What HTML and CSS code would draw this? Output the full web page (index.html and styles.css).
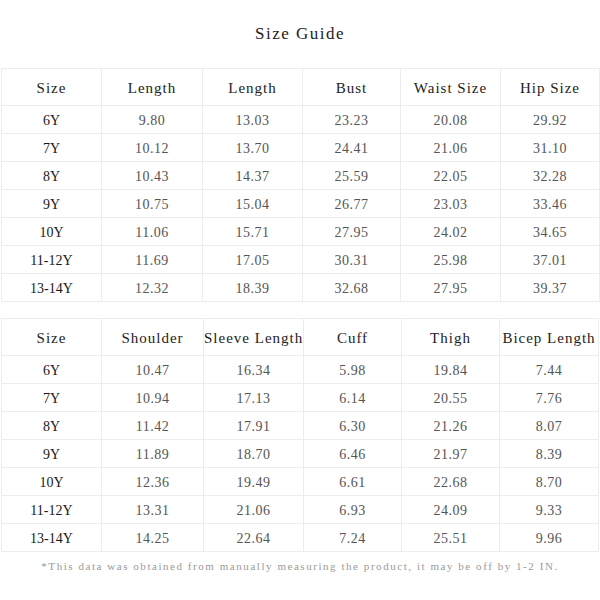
FILE: index.html
```
<!DOCTYPE html>
<html>
<head>
<meta charset="utf-8">
<link rel="stylesheet" href="styles.css">
</head>
<body>
<div class="page">
  <h1 class="title">Size Guide</h1>
  <table class="grid">
    <colgroup><col class="c1"><col class="c2"><col class="c3"><col class="c4"><col class="c5"><col class="c6"></colgroup>
    <tr class="head"><th>Size</th><th>Length</th><th>Length</th><th>Bust</th><th>Waist Size</th><th>Hip Size</th></tr>
    <tr><th>6Y</th><td>9.80</td><td>13.03</td><td>23.23</td><td>20.08</td><td>29.92</td></tr>
    <tr><th>7Y</th><td>10.12</td><td>13.70</td><td>24.41</td><td>21.06</td><td>31.10</td></tr>
    <tr><th>8Y</th><td>10.43</td><td>14.37</td><td>25.59</td><td>22.05</td><td>32.28</td></tr>
    <tr><th>9Y</th><td>10.75</td><td>15.04</td><td>26.77</td><td>23.03</td><td>33.46</td></tr>
    <tr><th>10Y</th><td>11.06</td><td>15.71</td><td>27.95</td><td>24.02</td><td>34.65</td></tr>
    <tr><th>11-12Y</th><td>11.69</td><td>17.05</td><td>30.31</td><td>25.98</td><td>37.01</td></tr>
    <tr><th>13-14Y</th><td>12.32</td><td>18.39</td><td>32.68</td><td>27.95</td><td>39.37</td></tr>
  </table>
  <table class="grid second">
    <colgroup><col class="c1"><col class="d2"><col class="c3"><col class="c4"><col class="d5"><col class="c6"></colgroup>
    <tr class="head"><th>Size</th><th>Shoulder</th><th>Sleeve Length</th><th>Cuff</th><th>Thigh</th><th>Bicep Length</th></tr>
    <tr><th>6Y</th><td>10.47</td><td>16.34</td><td>5.98</td><td>19.84</td><td>7.44</td></tr>
    <tr><th>7Y</th><td>10.94</td><td>17.13</td><td>6.14</td><td>20.55</td><td>7.76</td></tr>
    <tr><th>8Y</th><td>11.42</td><td>17.91</td><td>6.30</td><td>21.26</td><td>8.07</td></tr>
    <tr><th>9Y</th><td>11.89</td><td>18.70</td><td>6.46</td><td>21.97</td><td>8.39</td></tr>
    <tr><th>10Y</th><td>12.36</td><td>19.49</td><td>6.61</td><td>22.68</td><td>8.70</td></tr>
    <tr><th>11-12Y</th><td>13.31</td><td>21.06</td><td>6.93</td><td>24.09</td><td>9.33</td></tr>
    <tr><th>13-14Y</th><td>14.25</td><td>22.64</td><td>7.24</td><td>25.51</td><td>9.96</td></tr>
  </table>
  <p class="note">*This data was obtained from manually measuring the product, it may be off by 1-2 IN.</p>
</div>
</body>
</html>
```
FILE: styles.css
```
html, body {
  margin: 0;
  padding: 0;
  background: #fff;
}
.page {
  width: 600px;
  padding: 23px 0 0;
  font-family: "Liberation Serif", serif;
  color: #222;
}
.title {
  margin: 0;
  height: 22px;
  line-height: 22px;
  font-size: 17px;
  letter-spacing: 1.5px;
  font-weight: normal;
  text-align: center;
  color: #222;
}
.grid {
  margin: 23px 0 0 1px;
  width: 598px;
  border-collapse: collapse;
  table-layout: fixed;
}
.grid.second {
  margin-top: 16px;
}
.c1 { width: 100px; }
.c2 { width: 101px; }
.c3 { width: 100px; }
.c4 { width: 98px; }
.c5 { width: 100px; }
.c6 { width: 99px; }
.d2 { width: 102px; }
.d5 { width: 98px; }
.grid th, .grid td {
  border: 1px solid #ececec;
  text-align: center;
  padding: 2px 0 0;
  height: 25px;
  white-space: nowrap;
}
.grid th {
  font-weight: normal;
  font-size: 14px;
  color: #1a1a1a;
}
.grid td {
  font-size: 14px;
  letter-spacing: 0.5px;
  color: #555;
}
.grid .head th {
  height: 34px;
  font-size: 15px;
  letter-spacing: 1px;
  color: #222;
}
.note {
  margin: 8px 0 0;
  text-align: center;
  font-size: 11px;
  line-height: 12px;
  letter-spacing: 1.55px;
  color: #9a9a9a;
}
```
